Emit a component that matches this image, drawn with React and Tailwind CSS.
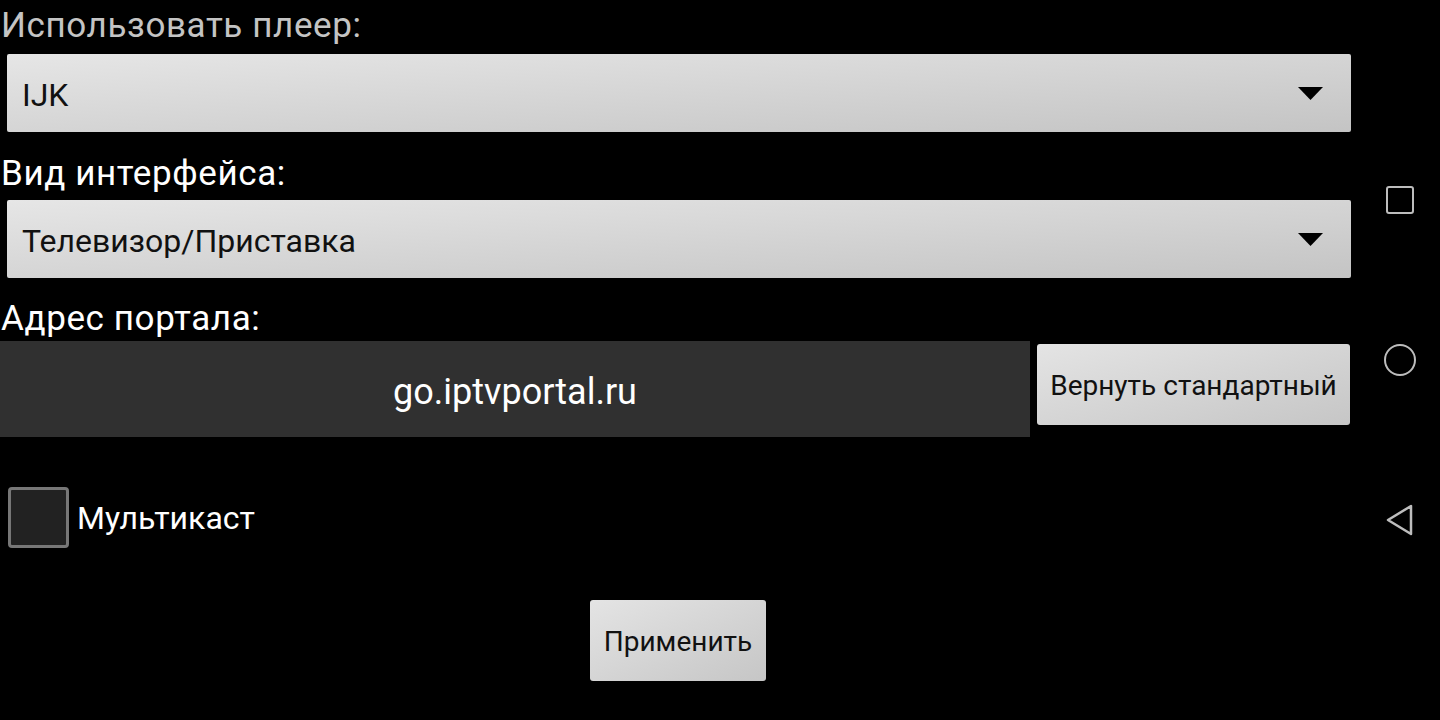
import React from "react";

function Arrow() {
  return (
    <svg width="25" height="13" viewBox="0 0 25 13" className="block">
      <polygon points="0,0 25,0 12.5,13" fill="#000" />
    </svg>
  );
}

function Spinner({ text }) {
  return (
    <div className="ml-[7px] w-[1344px] h-[78px] rounded-[2px] bg-gradient-to-br from-[#e6e6e6] to-[#c4c4c4] shadow-[0_1px_1px_rgba(0,0,0,0.4)] flex items-center justify-between pl-[15px] pr-[28px]">
      <span className="pt-[3px] text-[32px] text-[#111]">{text}</span>
      <Arrow />
    </div>
  );
}

export default function App() {
  return (
    <div
      className="w-[1440px] h-[720px] bg-black flex overflow-hidden"
      style={{ fontFamily: "Roboto, 'Noto Sans', sans-serif" }}
    >
      <div className="w-[1360px] flex flex-col">
        <div className="h-[54px] pt-[7px] pl-[1px] text-[35px] leading-[38px] tracking-[0.6px] text-[#c4c4c4]">
          Использовать плеер:
        </div>
        <Spinner text="IJK" />
        <div className="h-[68px] pt-[23px] pl-[1px] text-[35px] leading-[38px] tracking-[0.6px] text-white">
          Вид интерфейса:
        </div>
        <Spinner text="Телевизор/Приставка" />
        <div className="h-[63px] pt-[22px] pl-[1px] text-[35px] leading-[38px] tracking-[0.6px] text-white">
          Адрес портала:
        </div>
        <div className="flex items-start">
          <div className="w-[1030px] h-[96px] bg-[#303030] flex items-center justify-center pt-[5px] text-[36px] text-white">
            go.iptvportal.ru
          </div>
          <div className="ml-[7px] mt-[3px] w-[313px] h-[81px] rounded-[3px] bg-gradient-to-br from-[#e4e4e4] to-[#c6c6c6] flex items-center justify-center pt-[2px] text-[28px] text-[#111]">
            Вернуть стандартный
          </div>
        </div>
        <div className="mt-[50px] flex items-center">
          <div className="ml-[8px] w-[61px] h-[61px] rounded-[4px] border-[3px] border-[#777] bg-[#222]" />
          <span className="ml-[8px] text-[32px] text-white">Мультикаст</span>
        </div>
        <div className="mt-[52px] flex justify-center pr-[4px]">
          <div className="w-[176px] h-[81px] rounded-[3px] bg-gradient-to-br from-[#e4e4e4] to-[#c6c6c6] flex items-center justify-center pt-[2px] text-[28px] text-[#111]">
            Применить
          </div>
        </div>
      </div>
      <div className="w-[80px] flex flex-col items-center">
        <div className="mt-[186px] w-[28px] h-[28px] rounded-[3px] border-[2px] border-[#bdbdbd]" />
        <div className="mt-[130px] w-[32px] h-[32px] rounded-full border-[2px] border-[#bdbdbd]" />
        <svg width="32" height="36" viewBox="0 0 32 36" className="mt-[126px]">
          <polygon points="4,18 27,4 27,32" fill="none" stroke="#bdbdbd" strokeWidth="2.5" strokeLinejoin="round" />
        </svg>
      </div>
    </div>
  );
}
